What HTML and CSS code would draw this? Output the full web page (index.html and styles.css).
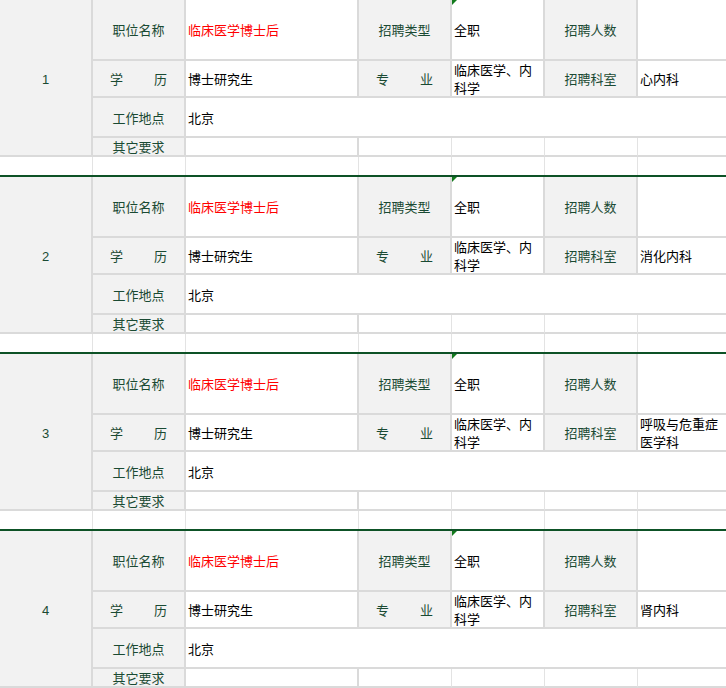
FILE: index.html
```html
<!DOCTYPE html>
<html lang="zh-CN">
<head>
<meta charset="utf-8">
<title>招聘岗位</title>
<link rel="stylesheet" href="styles.css">
</head>
<body>
<div class="sheet">

  <div class="block">
    <div class="cell num">1</div>
    <div class="cell label">职位名称</div>
    <div class="cell value red">临床医学博士后</div>
    <div class="cell label">招聘类型</div>
    <div class="cell value flag">全职</div>
    <div class="cell label">招聘人数</div>
    <div class="cell value"></div>

    <div class="cell label dist"><span>学</span><span>历</span></div>
    <div class="cell value">博士研究生</div>
    <div class="cell label dist"><span>专</span><span>业</span></div>
    <div class="cell value wrap">临床医学、内科学</div>
    <div class="cell label">招聘科室</div>
    <div class="cell value">心内科</div>

    <div class="cell label">工作地点</div>
    <div class="cell value span-rest">北京</div>

    <div class="cell label short">其它要求</div>
    <div class="cell value"></div>
    <div class="cell grid-d"></div>
    <div class="cell grid-d"></div>
    <div class="cell grid-d"></div>
    <div class="cell grid-d"></div>

    <div class="cell blank"></div>
    <div class="cell blank"></div>
    <div class="cell blank"></div>
    <div class="cell blank"></div>
    <div class="cell blank"></div>
    <div class="cell blank"></div>
    <div class="cell blank"></div>
    <div class="divider"></div>
  </div>

  <div class="block">
    <div class="cell num">2</div>
    <div class="cell label">职位名称</div>
    <div class="cell value red">临床医学博士后</div>
    <div class="cell label">招聘类型</div>
    <div class="cell value flag">全职</div>
    <div class="cell label">招聘人数</div>
    <div class="cell value"></div>

    <div class="cell label dist"><span>学</span><span>历</span></div>
    <div class="cell value">博士研究生</div>
    <div class="cell label dist"><span>专</span><span>业</span></div>
    <div class="cell value wrap">临床医学、内科学</div>
    <div class="cell label">招聘科室</div>
    <div class="cell value">消化内科</div>

    <div class="cell label">工作地点</div>
    <div class="cell value span-rest">北京</div>

    <div class="cell label short">其它要求</div>
    <div class="cell value"></div>
    <div class="cell grid-d"></div>
    <div class="cell grid-d"></div>
    <div class="cell grid-d"></div>
    <div class="cell grid-d"></div>

    <div class="cell blank"></div>
    <div class="cell blank"></div>
    <div class="cell blank"></div>
    <div class="cell blank"></div>
    <div class="cell blank"></div>
    <div class="cell blank"></div>
    <div class="cell blank"></div>
    <div class="divider"></div>
  </div>

  <div class="block">
    <div class="cell num">3</div>
    <div class="cell label">职位名称</div>
    <div class="cell value red">临床医学博士后</div>
    <div class="cell label">招聘类型</div>
    <div class="cell value flag">全职</div>
    <div class="cell label">招聘人数</div>
    <div class="cell value"></div>

    <div class="cell label dist"><span>学</span><span>历</span></div>
    <div class="cell value">博士研究生</div>
    <div class="cell label dist"><span>专</span><span>业</span></div>
    <div class="cell value wrap">临床医学、内科学</div>
    <div class="cell label">招聘科室</div>
    <div class="cell value wrap">呼吸与危重症医学科</div>

    <div class="cell label">工作地点</div>
    <div class="cell value span-rest">北京</div>

    <div class="cell label short">其它要求</div>
    <div class="cell value"></div>
    <div class="cell grid-d"></div>
    <div class="cell grid-d"></div>
    <div class="cell grid-d"></div>
    <div class="cell grid-d"></div>

    <div class="cell blank"></div>
    <div class="cell blank"></div>
    <div class="cell blank"></div>
    <div class="cell blank"></div>
    <div class="cell blank"></div>
    <div class="cell blank"></div>
    <div class="cell blank"></div>
    <div class="divider"></div>
  </div>

  <div class="block">
    <div class="cell num">4</div>
    <div class="cell label">职位名称</div>
    <div class="cell value red">临床医学博士后</div>
    <div class="cell label">招聘类型</div>
    <div class="cell value flag">全职</div>
    <div class="cell label">招聘人数</div>
    <div class="cell value"></div>

    <div class="cell label dist"><span>学</span><span>历</span></div>
    <div class="cell value">博士研究生</div>
    <div class="cell label dist"><span>专</span><span>业</span></div>
    <div class="cell value wrap">临床医学、内科学</div>
    <div class="cell label">招聘科室</div>
    <div class="cell value">肾内科</div>

    <div class="cell label">工作地点</div>
    <div class="cell value span-rest">北京</div>

    <div class="cell label short">其它要求</div>
    <div class="cell value"></div>
    <div class="cell grid-d"></div>
    <div class="cell grid-d"></div>
    <div class="cell grid-d"></div>
    <div class="cell grid-d"></div>
  </div>

</div>
</body>
</html>
```

FILE: styles.css
```css
html, body {
  margin: 0;
  padding: 0;
  background: #ffffff;
}

body {
  width: 726px;
  height: 688px;
  overflow: hidden;
  font-family: "Noto Sans CJK SC", "Noto Sans", sans-serif;
  font-size: 13px;
  color: #000000;
}

.sheet {
  width: 726px;
  overflow: hidden;
}

.block {
  display: grid;
  grid-template-columns: 93px 93px 173px 93px 93px 93px 93px;
  grid-template-rows: 61px 37px 40px 19px 18px 2px;
  width: 731px;
}

.cell {
  box-sizing: border-box;
  border-right: 2px solid #dadada;
  border-bottom: 2px solid #dadada;
  display: flex;
  align-items: center;
  min-width: 0;
  overflow: hidden;
  line-height: 19px;
}

.num {
  grid-row: 1 / 5;
  grid-column: 1;
  background: #f2f2f2;
  justify-content: center;
  font-family: "Liberation Sans", "Noto Sans", sans-serif;
  font-size: 13px;
  color: #1a4a33;
  padding-top: 3px;
}

.label {
  background: #f2f2f2;
  color: #1a4a33;
  justify-content: center;
  white-space: nowrap;
}

.label.dist {
  justify-content: space-between;
  padding: 0 17px;
}

.label.short {
  align-items: flex-end;
  line-height: 16px;
}

.value {
  background: #ffffff;
  padding-left: 2px;
}

.value.wrap {
  display: block;
  word-break: break-all;
  line-height: 18px;
}

.red {
  color: #ff0000;
}

.flag {
  position: relative;
}

.flag::before {
  content: "";
  position: absolute;
  left: -1px;
  top: 0;
  width: 0;
  height: 0;
  border-top: 6px solid #127a1c;
  border-right: 6px solid transparent;
}

.span-rest {
  grid-column: 3 / -1;
}

.grid-d {
  background: #ffffff;
  border-right: 1px solid #e3e3e3;
}

.blank {
  background: #ffffff;
  border-right: 1px solid #e3e3e3;
  border-bottom: none;
}

.divider {
  grid-column: 1 / -1;
  background: #0d5226;
}
```
